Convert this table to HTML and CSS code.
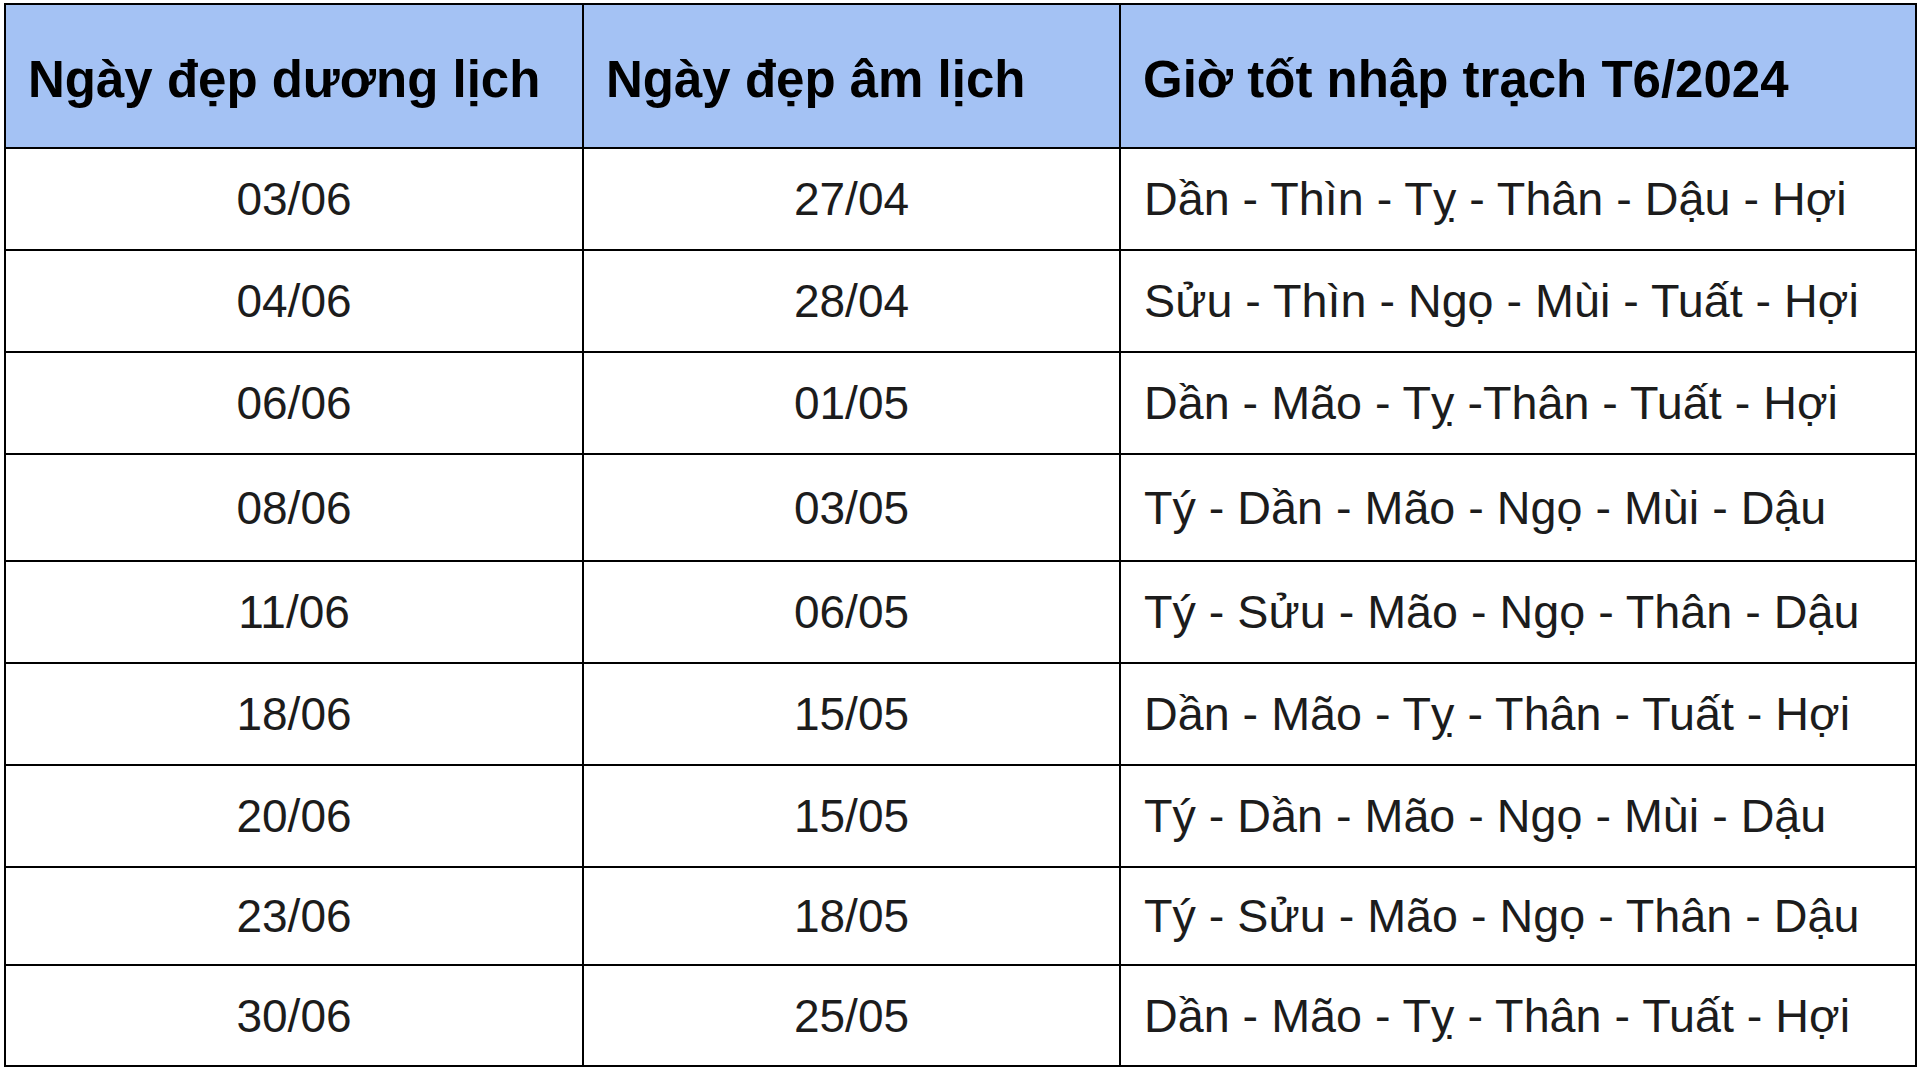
FILE: index.html
```html
<!DOCTYPE html>
<html lang="vi">
<head>
<meta charset="utf-8">
<title>Giờ tốt nhập trạch T6/2024</title>
<link rel="stylesheet" href="styles.css">
</head>
<body>
<table class="schedule">
  <colgroup>
    <col class="col-solar">
    <col class="col-lunar">
    <col class="col-hours">
  </colgroup>
  <thead>
    <tr class="head-row">
      <th>Ngày đẹp dương lịch</th>
      <th>Ngày đẹp âm lịch</th>
      <th>Giờ tốt nhập trạch T6/2024</th>
    </tr>
  </thead>
  <tbody>
    <tr><td class="date">03/06</td><td class="date">27/04</td><td class="hours">Dần - Thìn - Tỵ - Thân - Dậu - Hợi</td></tr>
    <tr><td class="date">04/06</td><td class="date">28/04</td><td class="hours">Sửu - Thìn - Ngọ - Mùi - Tuất - Hợi</td></tr>
    <tr><td class="date">06/06</td><td class="date">01/05</td><td class="hours">Dần - Mão - Tỵ -Thân - Tuất - Hợi</td></tr>
    <tr class="tall"><td class="date">08/06</td><td class="date">03/05</td><td class="hours">Tý - Dần - Mão - Ngọ - Mùi - Dậu</td></tr>
    <tr><td class="date">11/06</td><td class="date">06/05</td><td class="hours">Tý - Sửu - Mão - Ngọ - Thân - Dậu</td></tr>
    <tr><td class="date">18/06</td><td class="date">15/05</td><td class="hours">Dần - Mão - Tỵ - Thân - Tuất - Hợi</td></tr>
    <tr><td class="date">20/06</td><td class="date">15/05</td><td class="hours">Tý - Dần - Mão - Ngọ - Mùi - Dậu</td></tr>
    <tr class="short"><td class="date">23/06</td><td class="date">18/05</td><td class="hours">Tý - Sửu - Mão - Ngọ - Thân - Dậu</td></tr>
    <tr class="last"><td class="date">30/06</td><td class="date">25/05</td><td class="hours">Dần - Mão - Tỵ - Thân - Tuất - Hợi</td></tr>
  </tbody>
</table>
</body>
</html>
```
FILE: styles.css
```css
html, body {
  margin: 0;
  padding: 0;
  background: #ffffff;
}

body {
  padding: 3px 0 0 4px;
  font-family: "Liberation Sans", Arial, sans-serif;
  color: #1c1c1c;
}

.schedule {
  border-collapse: collapse;
  table-layout: fixed;
  width: 1911px;
}

.col-solar { width: 578px; }
.col-lunar { width: 537px; }
.col-hours { width: 796px; }

.schedule th,
.schedule td {
  border: 2px solid #000000;
  padding: 0 0 0 22px;
  vertical-align: middle;
  white-space: nowrap;
  overflow: hidden;
}

.head-row {
  height: 144px;
}

.head-row th {
  background: #a4c2f4;
  color: #000000;
  font-weight: 700;
  font-size: 51px;
  text-align: left;
  padding-top: 6px;
}

.schedule tbody tr {
  height: 102px;
}

.schedule tbody tr.tall { height: 107px; }
.schedule tbody tr.short { height: 98px; }
.schedule tbody tr.last { height: 101px; }

.schedule td {
  font-size: 46px;
  font-weight: 400;
}

.schedule td.date {
  text-align: center;
  padding: 0;
}

.schedule td.hours {
  text-align: left;
  padding-left: 23px;
  font-size: 46.7px;
}
```
